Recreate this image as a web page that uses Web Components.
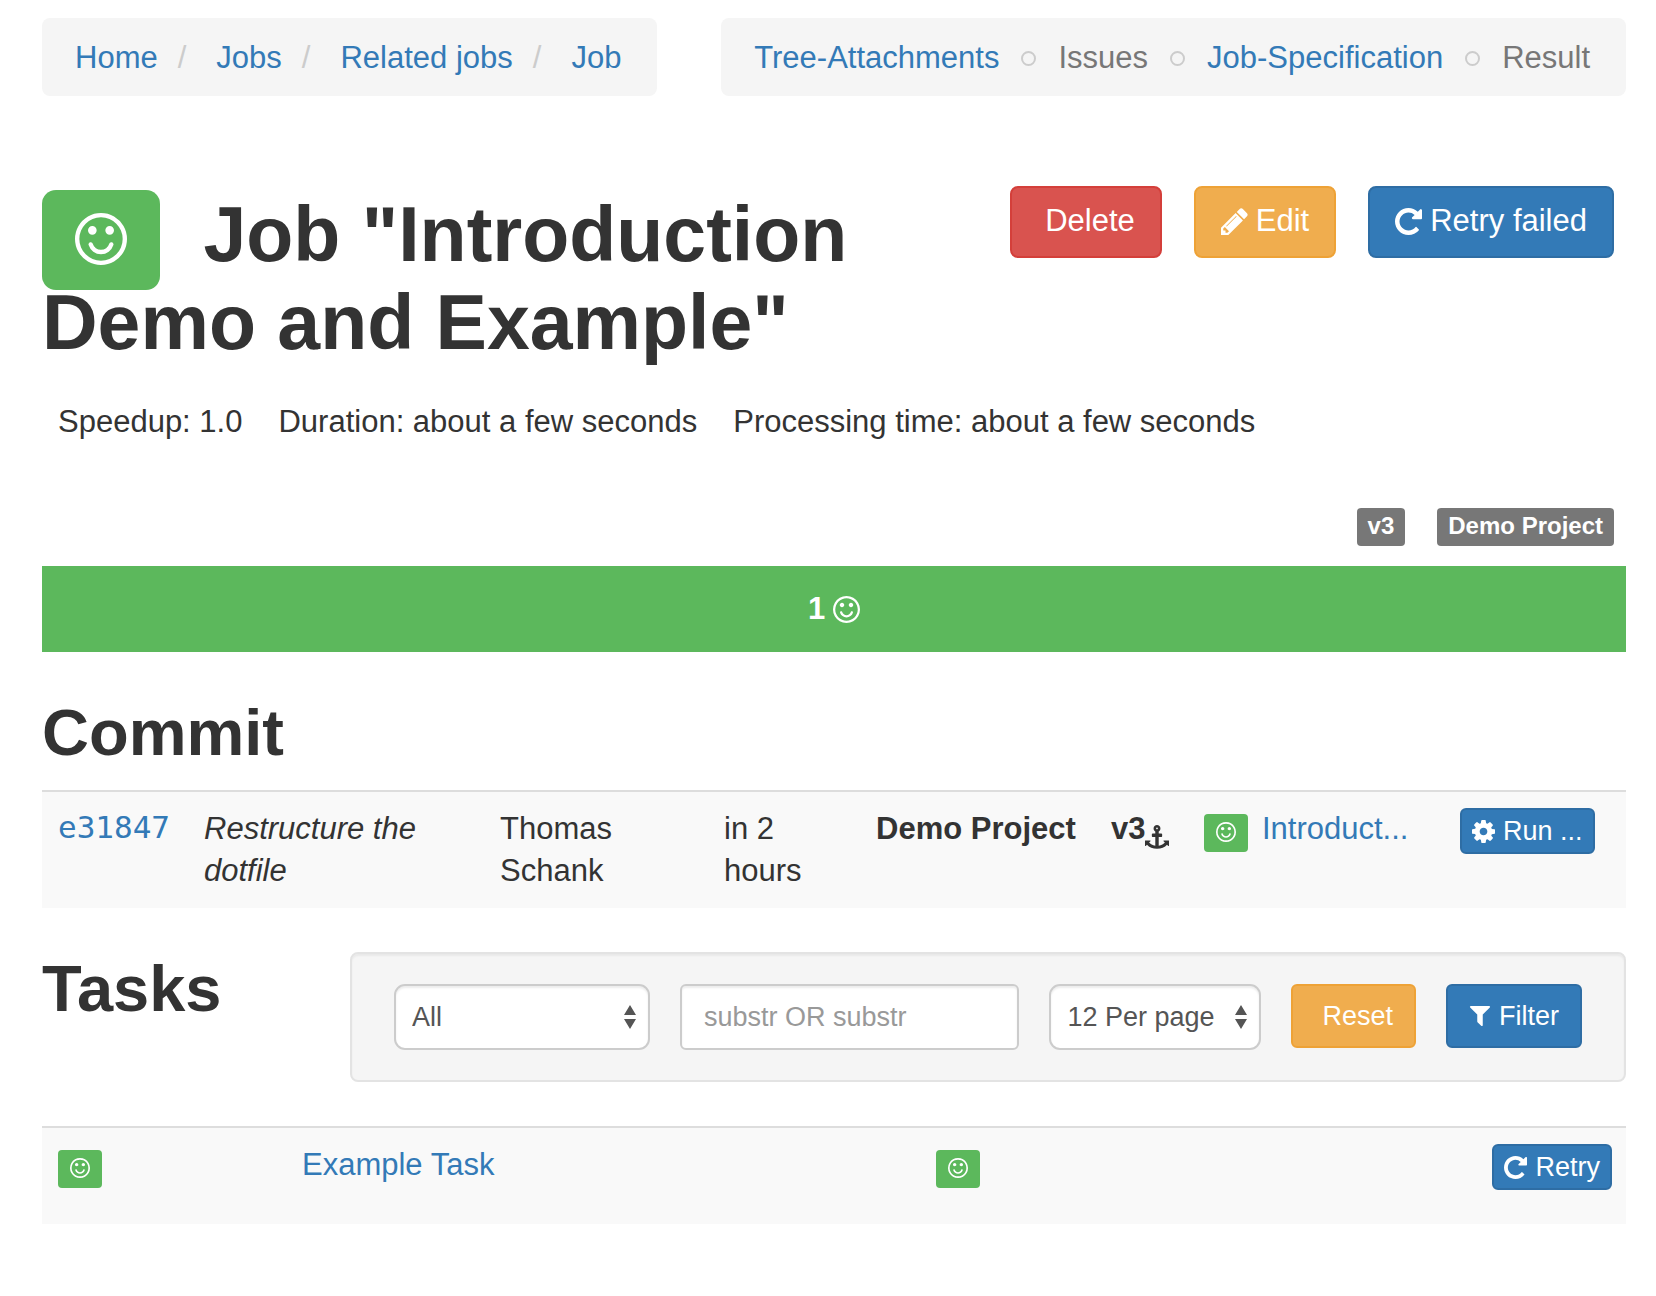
<!DOCTYPE html>
<html lang="en">
<head>
<meta charset="utf-8">
<meta name="viewport" content="width=device-width, initial-scale=1">
<title>Job "Introduction Demo and Example"</title>
<style>
  :root {
    --link: #337ab7;
    --text: #333;
    --muted: #777;
    --success: #5cb85c;
    --panel: #f5f5f5;
    --stripe: #f9f9f9;
    --rule: #ddd;
  }
  body {
    margin: 0;
    background: #fff;
    color: var(--text);
    font: 31px/42px "Liberation Sans", Arial, sans-serif;
  }
</style>
</head>
<body>
<job-page></job-page>

<script>
const define = (name, html, setup) => {
  const template = document.createElement('template');
  template.innerHTML = html;
  customElements.define(name, class extends HTMLElement {
    constructor() {
      super();
      this.attachShadow({ mode: 'open' }).append(template.content.cloneNode(true));
    }
    connectedCallback() {
      if (setup) setup(this, this.shadowRoot);
    }
  });
};

/* Icons: viewBox and path per name */
const ICONS = {
  smile: ['128 128 1536 1536', 'M1262 1075q-37 121-138 195t-228 74-228-74-138-195q-8-25 4-48.5t38-31.5q25-8 48.5 4t31.5 38q25 80 92.5 129.5t151.5 49.5 151.5-49.5 92.5-129.5q8-26 32-38t49-4 37 31.5 4 48.5zm-494-435q0 53-37.5 90.5t-90.5 37.5-90.5-37.5-37.5-90.5 37.5-90.5 90.5-37.5 90.5 37.5 37.5 90.5zm512 0q0 53-37.5 90.5t-90.5 37.5-90.5-37.5-37.5-90.5 37.5-90.5 90.5-37.5 90.5 37.5 37.5 90.5zm256 256q0-130-51-248.5t-136.5-204-204-136.5-248.5-51-248.5 51-204 136.5-136.5 204-51 248.5 51 248.5 136.5 204 204 136.5 248.5 51 248.5-51 204-136.5 136.5-204 51-248.5zm128 0q0 209-103 385.5t-279.5 279.5-385.5 103-385.5-103-279.5-279.5-103-385.5 103-385.5 279.5-279.5 385.5-103 385.5 103 279.5 279.5 103 385.5z'],
  repeat: ['128 128 1536 1536', 'M1664 256v448q0 26-19 45t-45 19h-448q-42 0-59-40-17-39 14-69l138-138q-148-137-349-137-104 0-198.5 40.5t-163.5 109.5-109.5 163.5-40.5 198.5 40.5 198.5 109.5 163.5 163.5 109.5 198.5 40.5q119 0 225-52t179-147q7-10 23-12 15 0 25 9l137 138q9 8 9.5 20.5t-7.5 22.5q-109 132-264 204.5t-327 72.5q-156 0-298-61t-245-164-164-245-61-298 61-298 164-245 245-164 298-61q147 0 284.5 55.5t244.5 156.5l130-129q29-31 70-14 39 17 39 59z'],
  cog: ['128 128 1536 1536', 'M1152 896q0-106-75-181t-181-75-181 75-75 181 75 181 181 75 181-75 75-181zm512-109v222q0 12-8 23t-20 13l-185 28q-19 54-39 91 35 50 107 138 10 12 10 25t-9 23q-27 37-99 108t-94 71q-12 0-26-9l-138-108q-44 23-91 38-16 136-29 186-7 28-36 28h-222q-14 0-24.5-8.5t-11.5-21.5l-28-184q-49-16-90-37l-141 107q-10 9-25 9-14 0-25-11-126-114-165-168-7-10-7-23 0-12 8-23 15-21 51-66.5t54-70.5q-27-50-41-99l-183-27q-13-2-21-12.5t-8-23.5v-222q0-12 8-23t19-13l186-28q14-46 39-92-40-57-107-138-10-12-10-24 0-10 9-23 26-36 98.5-107.5t94.5-71.5q13 0 26 10l138 107q44-23 91-38 16-136 29-186 7-28 36-28h222q14 0 24.5 8.5t11.5 21.5l28 184q49 16 90 37l142-107q9-9 24-9 13 0 25 10 129 119 165 170 7 8 7 22 0 12-8 23-15 21-51 66.5t-54 70.5q26 50 41 98l183 28q13 2 21 12.5t8 23.5z'],
  filter: ['128 192 1536 1536', 'M1595 295q17 41-14 70l-493 493v742q0 42-39 59-13 5-25 5-27 0-45-19l-256-256q-19-19-19-45v-486l-493-493q-31-29-14-70 17-39 59-39h1280q42 0 59 39z'],
  pencil: ['128 128 1536 1536', 'M491 1536l91-91-235-235-91 91v107h128v128h107zm523-928q0-22-22-22-10 0-17 7l-542 542q-7 7-7 17 0 22 22 22 10 0 17-7l542-542q7-7 7-17zm-54-192l416 416-832 832h-416v-416zm683 96q0 53-37 90l-166 166-416-416 166-165q36-38 90-38 53 0 91 38l235 234q37 39 37 91z'],
  anchor: ['0 0 1792 1792', 'M960 256q0-26-19-45t-45-19-45 19-19 45 19 45 45 19 45-19 19-45zm832 928v352q0 22-20 30-8 2-12 2-12 0-23-9l-93-93q-119 143-318.5 226.5t-429.5 83.5-429.5-83.5-318.5-226.5l-93 93q-9 9-23 9-4 0-12-2-20-8-20-30v-352q0-14 9-23t23-9h352q22 0 30 20 8 19-7 35l-100 100q67 91 189.5 153.5t271.5 82.5v-647h-192q-26 0-45-19t-19-45v-128q0-26 19-45t45-19h192v-163q-58-34-93-92.5t-35-128.5q0-106 75-181t181-75 181 75 75 181q0 70-35 128.5t-93 92.5v163h192q26 0 45 19t19 45v128q0 26-19 45t-45 19h-192v647q149-20 271.5-82.5t189.5-153.5l-100-100q-15-16-7-35 8-20 30-20h352q14 0 23 9t9 23z'],
  updown: ['0 0 12 24', 'M6 0L12 10H0zM6 24L0 14H12z']
};

define('ui-icon', `
  <style>
    :host { display: inline-block; width: var(--icon-size, 27px); height: var(--icon-size, 27px); flex: none; }
    svg { display: block; width: 100%; height: 100%; fill: currentColor; }
  </style>
  <svg aria-hidden="true"><path/></svg>
`, (host, root) => {
  const [box, d] = ICONS[host.getAttribute('name')];
  root.querySelector('svg').setAttribute('viewBox', box);
  root.querySelector('path').setAttribute('d', d);
});

/* Button: kind = warning | danger (default blue), size = md | sm (default large) */
define('ui-button', `
  <style>
    :host { display: inline-block; vertical-align: top; --bg: #337ab7; --line: #2e6da4; }
    :host([kind=warning]) { --bg: #f0ad4e; --line: #eea236; }
    :host([kind=danger]) { --bg: #d9534f; --line: #d43f3a; }
    button {
      display: flex; align-items: center; gap: 8px; box-sizing: border-box;
      height: 72px; padding: 0 25px 2px; margin: 0;
      border: 2px solid var(--line); border-radius: 8px;
      background: var(--bg); color: #fff; font: inherit; line-height: 42px;
      white-space: nowrap; cursor: pointer;
    }
    :host([bare]) button::before { content: ""; }
    :host([size=md]) button { --icon-size: 22px; height: 64px; padding: 0 21px; font-size: 27px; border-radius: 6px; }
    :host([size=sm]) button { --icon-size: 23px; height: 46px; padding: 0 10px; font-size: 27px; border-radius: 6px; }
  </style>
  <button type="button"><slot></slot></button>
`);

/* Green state marker with a smiley */
define('state-badge', `
  <style>
    :host {
      display: inline-flex; align-items: center; justify-content: center; box-sizing: border-box;
      width: 44px; height: 38px; padding-bottom: 2px; border-radius: 4px; vertical-align: top;
      background: var(--success); color: #fff; --icon-size: 20px;
    }
    :host([large]) { width: 118px; height: 100px; border-radius: 14px; --icon-size: 52px; }
  </style>
  <ui-icon name="smile"></ui-icon>
`);

define('tag-label', `
  <style>
    :host {
      display: block; box-sizing: border-box; height: 38px; padding: 0 11px; border-radius: 4px;
      background: #777; color: #fff; font-size: 24px; font-weight: bold; line-height: 36px;
    }
  </style>
  <slot></slot>
`);

define('crumb-bar', `
  <style>
    :host { display: block; }
    nav { padding: 19px 36px 17px 33px; border-radius: 8px; background: var(--panel); }
    ul { display: flex; margin: 0; padding: 0; list-style: none; white-space: nowrap; }
    li { display: flex; align-items: center; color: var(--muted); }
    a { color: var(--link); text-decoration: none; }
    li + li::before { content: "/"; margin: 0 30px 0 20px; color: #ccc; }
    :host([separator=ring]) li + li::before {
      content: ""; box-sizing: border-box; width: 15px; height: 15px; margin: 0 22px;
      border: 2px solid #ccc; border-radius: 50%;
    }
  </style>
  <nav><ul></ul></nav>
`, (host, root) => {
  root.querySelector('nav').setAttribute('aria-label', host.getAttribute('label'));
  const list = root.querySelector('ul');
  list.replaceChildren(...[...host.children].map(child => {
    const item = document.createElement('li');
    item.append(child.cloneNode(true));
    return item;
  }));
});

define('job-header', `
  <style>
    :host { display: block; }
    .top { display: flex; justify-content: space-between; align-items: flex-start; }
    h1 { flex: 0 1 900px; margin: 4px 0 0; font-size: 77px; line-height: 88px; font-weight: bold; }
    state-badge { margin: 0 22px -12px 0; }
    .actions { display: flex; gap: 32px; padding-right: 12px; }
    .stats { display: flex; gap: 36px; margin: 35px 0 0; padding: 0 16px; list-style: none; }
    .tags { display: flex; justify-content: flex-end; gap: 32px; margin-top: 65px; padding-right: 12px; }
    .bar {
      display: flex; align-items: center; justify-content: center; gap: 8px; height: 86px;
      margin-top: 20px; background: var(--success); color: #fff; font-weight: bold;
    }
  </style>
  <div class="top">
    <h1><state-badge large></state-badge> <slot></slot></h1>
    <div class="actions">
      <ui-button kind="danger" bare>Delete</ui-button>
      <ui-button kind="warning"><ui-icon name="pencil"></ui-icon>Edit</ui-button>
      <ui-button><ui-icon name="repeat"></ui-icon>Retry failed</ui-button>
    </div>
  </div>
  <ul class="stats">
    <li>Speedup: 1.0</li>
    <li>Duration: about a few seconds</li>
    <li>Processing time: about a few seconds</li>
  </ul>
  <div class="tags"><tag-label>v3</tag-label><tag-label>Demo Project</tag-label></div>
  <div class="bar"><span>1</span><ui-icon name="smile"></ui-icon></div>
`);

const TABLE_STYLE = `
  :host { display: block; }
  table { width: 100%; table-layout: fixed; border-collapse: separate; border-spacing: 0; }
  td { padding: 16px; border-top: 2px solid var(--rule); background: var(--stripe); vertical-align: top; text-align: left; }
  a { color: var(--link); text-decoration: none; }
  state-badge { margin-top: 6px; }
`;

define('commit-table', `
  <style>
    ${TABLE_STYLE}
    .hash { font-family: "DejaVu Sans Mono", monospace; line-height: 38px; }
    .hash a { display: block; }
    .strong { font-weight: bold; white-space: nowrap; }
    .strong ui-icon { --icon-size: 24px; vertical-align: -10px; }
    .job { white-space: nowrap; }
    .job a { margin-left: 14px; }
  </style>
  <table aria-label="Commit">
    <colgroup>
      <col style="width:146px"><col><col style="width:224px"><col style="width:152px">
      <col style="width:235px"><col style="width:93px"><col style="width:256px"><col style="width:182px">
    </colgroup>
    <tbody><tr>
      <td class="hash"><a href="#">e31847</a></td>
      <td><em>Restructure the dotfile</em></td>
      <td>Thomas Schank</td>
      <td>in 2 hours</td>
      <td class="strong">Demo Project</td>
      <td class="strong">v3<ui-icon name="anchor"></ui-icon></td>
      <td class="job"><state-badge></state-badge><a href="#">Introduct...</a></td>
      <td><ui-button size="sm"><ui-icon name="cog"></ui-icon>Run ...</ui-button></td>
    </tr></tbody>
  </table>
`);

define('task-table', `
  <style>
    ${TABLE_STYLE}
    td { height: 64px; }
    .action { text-align: right; padding-right: 14px; }
  </style>
  <table aria-label="Tasks">
    <colgroup><col style="width:244px"><col><col style="width:353px"><col style="width:353px"></colgroup>
    <tbody><tr>
      <td><state-badge></state-badge></td>
      <td><a href="#">Example Task</a></td>
      <td><state-badge></state-badge></td>
      <td class="action"><ui-button size="sm"><ui-icon name="repeat"></ui-icon>Retry</ui-button></td>
    </tr></tbody>
  </table>
`);

define('ui-select', `
  <style>
    :host { display: grid; align-items: center; color: #555; font-size: 27px; }
    select, ui-icon { grid-area: 1 / 1; }
    select {
      appearance: none; box-sizing: border-box; width: 100%; height: 66px; margin: 0; padding: 0 40px 0 16px;
      border: 2px solid #ccc; border-radius: 11px; background: #fff; color: inherit; font: inherit;
      box-shadow: inset 0 2px 2px rgba(0, 0, 0, .075);
    }
    ui-icon { justify-self: end; width: 12px; height: 24px; margin-right: 14px; pointer-events: none; }
  </style>
  <select></select><ui-icon name="updown"></ui-icon>
`, (host, root) => {
  const select = root.querySelector('select');
  select.setAttribute('aria-label', host.getAttribute('label'));
  select.replaceChildren(...[...host.children].map(option => option.cloneNode(true)));
});

define('task-filter', `
  <style>
    :host { display: block; }
    form {
      display: flex; align-items: flex-start; gap: 30px; padding: 30px 42px;
      border: 2px solid #e3e3e3; border-radius: 8px; background: var(--panel);
      box-shadow: inset 0 2px 2px rgba(0, 0, 0, .05);
    }
    .state { flex: 0 0 256px; }
    .page { flex: 0 0 212px; }
    input {
      flex: 1; width: 0; min-width: 0; box-sizing: border-box; height: 66px; margin: 0; padding: 0 22px;
      border: 2px solid #ccc; border-radius: 6px; background: #fff; color: #555; font: inherit; font-size: 27px;
      box-shadow: inset 0 2px 2px rgba(0, 0, 0, .075);
    }
    input::placeholder { color: #999; opacity: 1; }
  </style>
  <form>
    <ui-select class="state" label="State"><option>All</option></ui-select>
    <input type="text" aria-label="Name" placeholder="substr OR substr">
    <ui-select class="page" label="Per page"><option>12 Per page</option></ui-select>
    <ui-button size="md" kind="warning" bare>Reset</ui-button>
    <ui-button size="md"><ui-icon name="filter"></ui-icon>Filter</ui-button>
  </form>
`);

define('job-page', `
  <style>
    :host { display: block; padding: 18px 30px 72px 42px; }
    .nav { display: flex; justify-content: space-between; align-items: flex-start; }
    job-header { margin-top: 90px; }
    h2 { margin: 0; font-size: 65px; line-height: 70px; font-weight: bold; }
    .commit { margin: 46px 0 22px; }
    .tasks { display: flex; align-items: flex-start; margin: 44px 0; }
    .tasks h2 { flex: 0 0 308px; margin-top: 2px; }
    task-filter { flex: 1; min-width: 0; }
  </style>
  <div class="nav">
    <crumb-bar label="Breadcrumb">
      <a href="#">Home</a><a href="#">Jobs</a><a href="#">Related jobs</a><a href="#">Job</a>
    </crumb-bar>
    <crumb-bar label="Job" separator="ring">
      <a href="#">Tree-Attachments</a><span>Issues</span><a href="#">Job-Specification</a><span>Result</span>
    </crumb-bar>
  </div>
  <main>
    <job-header>Job "Introduction Demo and Example"</job-header>
    <h2 class="commit">Commit</h2>
    <commit-table></commit-table>
    <div class="tasks"><h2>Tasks</h2><task-filter></task-filter></div>
    <task-table></task-table>
  </main>
`);
</script>
</body>
</html>
